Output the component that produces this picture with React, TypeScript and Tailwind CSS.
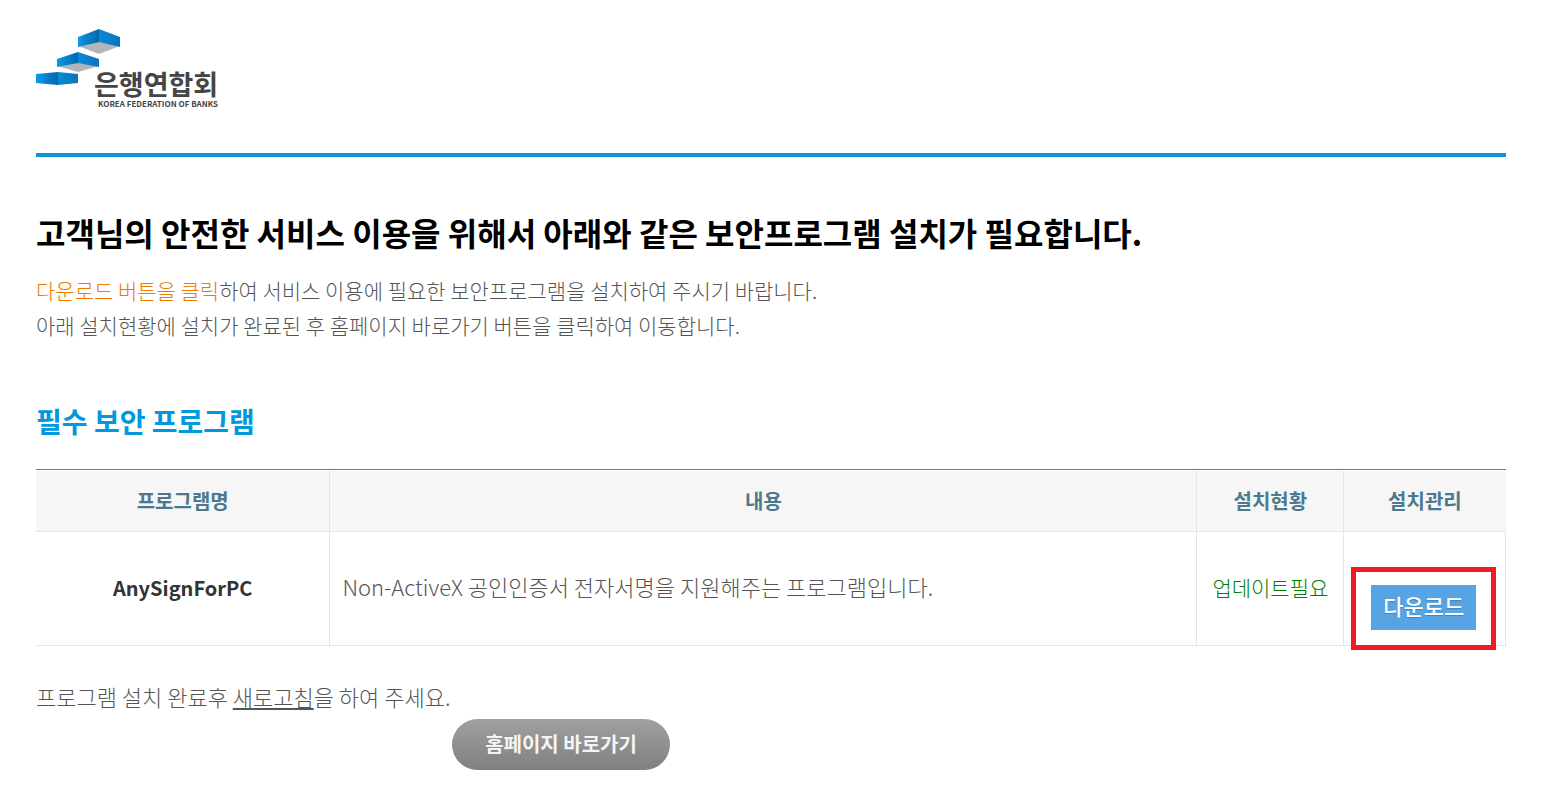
import React from 'react';

const programs = [
  {
    name: 'AnySignForPC',
    description: 'Non-ActiveX 공인인증서 전자서명을 지원해주는 프로그램입니다.',
    status: '업데이트필요',
  },
];

function Logo() {
  return <a href="#home" className="block w-[184px]" aria-label="은행연합회">
      <svg width="184" height="80" viewBox="0 0 184 80">
        <defs>
          <linearGradient id="left" x1="0" y1="0" x2="1" y2="0">
            <stop offset="0" stopColor="#0a9be6" />
            <stop offset="1" stopColor="#0066ae" />
          </linearGradient>
          <linearGradient id="right" x1="0" y1="0" x2="1" y2="0">
            <stop offset="0" stopColor="#0a8ad6" />
            <stop offset="1" stopColor="#0a74bc" />
          </linearGradient>
        </defs>
        {/* top block */}
        <path d="M42 17 L63 12 L84 17 L63 25 Z" fill="#b4b5b9" />
        <path d="M42 8 L63 0 V13 L42 18 Z" fill="url(#left)" />
        <path d="M63 0 L84 8 V18 L63 13 Z" fill="url(#right)" />
        {/* middle block */}
        <path d="M21 37 L42 33 L63 37 L42 43 Z" fill="#b4b5b9" />
        <path d="M21 30 L42 23 V34 L21 38 Z" fill="url(#left)" />
        <path d="M42 23 L63 30 V38 L42 34 Z" fill="url(#right)" />
        {/* bottom block */}
        <path d="M0 45 L22 43 V56 L0 54 Z" fill="url(#left)" />
        <path d="M22 43 L42 45 V54 L22 56 Z" fill="url(#right)" />
        <text x="58" y="66" fontSize="27" className="fill-[#454545] font-bold">은행연합회</text>
        <text x="62" y="78" fontSize="8" className="fill-[#454545] font-bold">KOREA FEDERATION OF BANKS</text>
      </svg>
    </a>;
}

function ProgramTable() {
  return <div className="border-t border-[#0ca0c4] pt-px">
      <table className="w-full table-fixed border-collapse text-[21px]">
        <thead>
          <tr className="h-[60px] bg-[#f6f6f6] text-xl text-[#4b7a90] border-b border-[#e5e5e5]">
            <th className="w-[20%] font-bold border-r border-[#e5e5e5]">프로그램명</th>
            <th className="w-[59%] font-bold border-r border-[#e5e5e5]">내용</th>
            <th className="w-[10%] font-bold border-r border-[#e5e5e5]">설치현황</th>
            <th className="w-[11%] font-bold">설치관리</th>
          </tr>
        </thead>
        <tbody>
          {programs.map(program => <tr key={program.name} className="h-[114px] border-b border-[#e5e5e5]">
              <td className="border-r border-[#e5e5e5] text-center text-xl font-bold text-[#333]">{program.name}</td>
              <td className="border-r border-[#e5e5e5] px-3 pb-1 text-[22px] font-light text-[#555]">{program.description}</td>
              <td className="border-r border-[#e5e5e5] text-center font-light whitespace-nowrap text-[#008000]">{program.status}</td>
              <td className="border-r border-[#e5e5e5] pt-[38px] pr-0.5 text-center">
                <div className="relative inline-block align-top">
                  <button className="block h-[45px] w-[105px] bg-[#56a4e4] pb-1 text-[22px] leading-none font-medium text-white text-shadow-xs">다운로드</button>
                  <div className="pointer-events-none absolute -inset-x-5 -top-[18px] -bottom-5 border-5 border-[#ee1c25]"></div>
                </div>
              </td>
            </tr>)}
        </tbody>
      </table>
    </div>;
}

export default function App() {
  return <div className="bg-white pt-[29px] pb-7 pl-9 pr-[46px] font-['Noto_Sans_CJK_KR',sans-serif]">
      <header className="border-b-4 border-[#0d95d8] pb-11">
        <Logo />
      </header>
      <main>
        <h1 className="mt-[51px] text-[32px] leading-12 font-bold text-black">
          고객님의 안전한 서비스 이용을 위해서 아래와 같은 보안프로그램 설치가 필요합니다.
        </h1>
        <p className="mt-[17px] text-[21px] leading-[35px] font-light text-[#555]">
          <span className="text-[#ee7b00]">다운로드 버튼을 클릭</span>하여 서비스 이용에 필요한 보안프로그램을 설치하여 주시기 바랍니다.
          <br />
          아래 설치현황에 설치가 완료된 후 홈페이지 바로가기 버튼을 클릭하여 이동합니다.
        </p>
        <h2 className="mt-14 mb-[26px] text-[28px] leading-11 font-bold text-[#0099dd]">필수 보안 프로그램</h2>
        <ProgramTable />
        <p className="mt-[34px] text-[22px] leading-8 font-light text-[#555]">
          프로그램 설치 완료후 <a href="#refresh" className="underline decoration-2 underline-offset-2">새로고침</a>을 하여 주세요.
        </p>
        <div className="mt-[7px] max-w-[1050px] text-center">
          <button className="h-[51px] w-[218px] rounded-full bg-linear-to-b from-[#a0a0a0] to-[#808080] text-xl font-bold text-[#f4f4f4]">홈페이지 바로가기</button>
        </div>
      </main>
    </div>;
}
